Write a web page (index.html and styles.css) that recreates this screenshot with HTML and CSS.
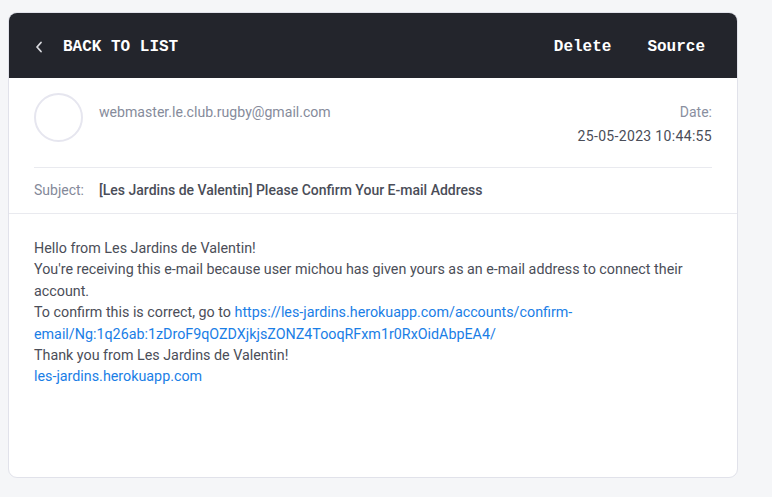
FILE: index.html
```html
<!DOCTYPE html>
<html>
<head>
<meta charset="utf-8">
<link rel="stylesheet" href="styles.css">
</head>
<body>
<div class="card">
  <div class="topbar">
    <a class="back">
      <svg class="chev" width="8" height="12" viewBox="0 0 8 12"><path d="M6 1.5L2 6l4 4.5" fill="none" stroke="#d8d9de" stroke-width="1.8" stroke-linecap="round" stroke-linejoin="round"/></svg>
      <span>BACK TO LIST</span>
    </a>
    <div class="actions">
      <span>Delete</span>
      <span>Source</span>
    </div>
  </div>
  <div class="meta">
    <div class="from-row">
      <div class="avatar"></div>
      <div class="from">webmaster.le.club.rugby@gmail.com</div>
      <div class="date">
        <div class="date-label">Date:</div>
        <div class="date-value">25-05-2023 10:44:55</div>
      </div>
    </div>
    <div class="subject-row">
      <span class="subject-label">Subject:</span>
      <span class="subject">[Les Jardins de Valentin] Please Confirm Your E-mail Address</span>
    </div>
  </div>
  <div class="content">
    Hello from Les Jardins de Valentin!<br>
    You're receiving this e-mail because user michou has given yours as an e-mail address to connect their account.<br>
    To confirm this is correct, go to <a class="link">https://les-jardins.herokuapp.com/accounts/confirm-email/Ng:1q26ab:1zDroF9qOZDXjkjsZONZ4TooqRFxm1r0RxOidAbpEA4/</a><br>
    Thank you from Les Jardins de Valentin!<br>
    <a class="link">les-jardins.herokuapp.com</a>
  </div>
</div>
</body>
</html>
```
FILE: styles.css
```css
html, body {
  margin: 0;
  padding: 0;
  background: #f5f6f8;
}
body {
  padding: 12px 0 0 8px;
  font-family: Roboto, "Liberation Sans", sans-serif;
}
.card {
  width: 728px;
  height: 464px;
  background: #fff;
  border: 1px solid #e1e2ea;
  border-radius: 9px;
  overflow: hidden;
  display: flex;
  flex-direction: column;
}
.topbar {
  height: 65px;
  background: #23252c;
  display: flex;
  align-items: center;
  justify-content: space-between;
  padding: 2px 32px 0 26px;
  box-sizing: border-box;
  font-family: "Liberation Mono", "Courier New", monospace;
  font-weight: bold;
  font-size: 16px;
  color: #fff;
  flex-shrink: 0;
}
.back {
  display: flex;
  align-items: center;
  gap: 20px;
}
.chev { display: block; }
.actions {
  display: flex;
  gap: 36px;
}
.meta {
  padding: 0 25px;
  border-bottom: 1px solid #e9eaef;
}
.from-row {
  display: flex;
  align-items: flex-start;
  padding: 15px 0 22px;
  border-bottom: 1px solid #e9eaef;
}
.avatar {
  width: 45px;
  height: 45px;
  border: 2px solid #e6e6ef;
  border-radius: 50%;
  flex-shrink: 0;
  margin-right: 16px;
}
.from {
  flex: 1;
  font-size: 14.1px;
  color: #868b9b;
  padding-top: 11px;
}
.date {
  text-align: right;
  font-size: 14px;
  padding-top: 11px;
}
.date-label {
  color: #8a8fa0;
  line-height: 17px;
}
.date-value {
  color: #4a4d58;
  margin-top: 7px;
  line-height: 17px;
  letter-spacing: 0.33px;
}
.subject-row {
  display: flex;
  align-items: center;
  height: 45px;
  padding-bottom: 2px;
  box-sizing: border-box;
  font-size: 14px;
}
.subject-label {
  color: #848999;
  width: 65px;
}
.subject {
  color: #4a4d58;
  font-weight: 500;
}
.content {
  padding: 24px 25px;
  font-size: 14.3px;
  line-height: 21.4px;
  color: #4b4e58;
}
.link {
  color: #1a7ee6;
}
```
